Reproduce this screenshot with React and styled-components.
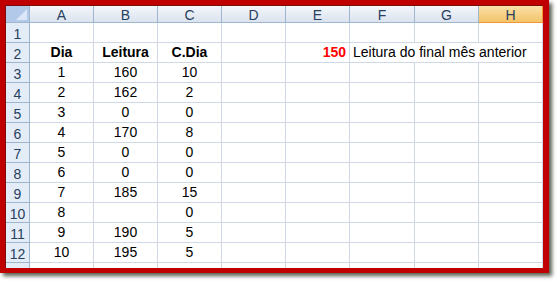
import React from "react"
import styled, { createGlobalStyle } from "styled-components"

const columns = ["A", "B", "C", "D", "E", "F", "G", "H"]
const selectedColumn = "H"

const rows = [
  [],
  [{ v: "Dia", bold: true }, { v: "Leitura", bold: true }, { v: "C.Dia", bold: true }],
  ["1", "160", "10"],
  ["2", "162", "2"],
  ["3", "0", "0"],
  ["4", "170", "8"],
  ["5", "0", "0"],
  ["6", "0", "0"],
  ["7", "185", "15"],
  ["8", "", "0"],
  ["9", "190", "5"],
  ["10", "195", "5"],
]

// last row is only a sliver under the frame, so it has no label
const visibleRows = 12

export default function App() {
  const renderRow = (cells, i) => {
    const n = i + 1
    const items = [<RowHead key="h">{n <= visibleRows ? n : ""}</RowHead>]
    if (n === 2) {
      cells.forEach((c, j) => (
        items.push(<Cell key={j} $bold={c.bold}>{c.v}</Cell>)
      ))
      items.push(<Cell key="d" />)
      items.push(<Cell key="e" $align="right" $bold $color="#ff0000">150</Cell>)
      items.push(<Cell key="f" $span={3} $align="left">Leitura do final mês anterior</Cell>)
    } else {
      columns.forEach((col, j) => (
        items.push(<Cell key={col}>{cells[j] || ""}</Cell>)
      ))
    }
    return items
  }

  return (
    <>
      <GlobalStyle />
      <Page>
        <Frame>
          <Sheet>
            <Corner>
              <svg width="11" height="11" viewBox="0 0 11 11">
                <polygon points="11,0 11,11 0,11" fill="#dbe6f6" />
              </svg>
            </Corner>
            {columns.map(c => (
              <ColHead key={c} $selected={c === selectedColumn}>{c}</ColHead>
            ))}
            {[...rows, []].map(renderRow)}
          </Sheet>
        </Frame>
      </Page>
    </>
  )
}

const GlobalStyle = createGlobalStyle`
  body {
    margin: 0;
    background: #ffffff;
    font-family: "Liberation Sans", Arial, sans-serif;
  }
`

const Page = styled.div`
  width: 560px;
  height: 282px;
  overflow: hidden;
`

const Frame = styled.div`
  width: 549px;
  height: 273px;
  box-sizing: border-box;
  border-style: solid;
  border-color: #c00000;
  border-width: 5px 6px 5px 5px;
  box-shadow: 3px 3px 4px rgba(70, 75, 60, 0.9);
`

const Sheet = styled.div`
  height: 100%;
  box-sizing: border-box;
  overflow: hidden;
  border-top: 1px solid #7c0b0b;
  border-left: 1px solid #7c0b0b;
  background: #ffffff;
  display: grid;
  grid-template-columns: 24px repeat(4, 64px) 64px 65px 64px 64px;
  grid-template-rows: 17px;
  grid-auto-rows: 20px;
  font-size: 14px;
`

const headBase = `
  box-sizing: border-box;
  display: flex;
  align-items: center;
  justify-content: center;
  color: #26405e;
  border-right: 1px solid #9eb6ce;
  border-bottom: 1px solid #9eb6ce;
`

const Corner = styled.div`
  ${headBase}
  background: #b3c9ea;
  justify-content: flex-end;
  align-items: flex-end;
  padding: 0 2px 2px 0;
`

const ColHead = styled.div`
  ${headBase}
  background: ${p =>
    p.$selected
      ? "linear-gradient(#fae0a8, #f3c46a)"
      : "linear-gradient(#f3f6fb, #dbe3ee)"};
  border-right-color: ${p => (p.$selected ? "#f29436" : "#9eb6ce")};
  border-bottom-color: ${p => (p.$selected ? "#f29436" : "#9eb6ce")};
  padding-top: 1px;
`

const RowHead = styled.div`
  ${headBase}
  background: #e4ecf7;
  padding-top: 2px;
`

const Cell = styled.div`
  box-sizing: border-box;
  grid-column: span ${p => p.$span || 1};
  display: flex;
  align-items: flex-end;
  justify-content: ${p =>
    p.$align === "right" ? "flex-end" : p.$align === "left" ? "flex-start" : "center"};
  padding: 0 3px 2px 3px;
  white-space: nowrap;
  color: ${p => p.$color || "#000000"};
  font-weight: ${p => (p.$bold ? "bold" : "normal")};
  border-right: 1px solid #d0d7e5;
  border-bottom: 1px solid #d0d7e5;
`
